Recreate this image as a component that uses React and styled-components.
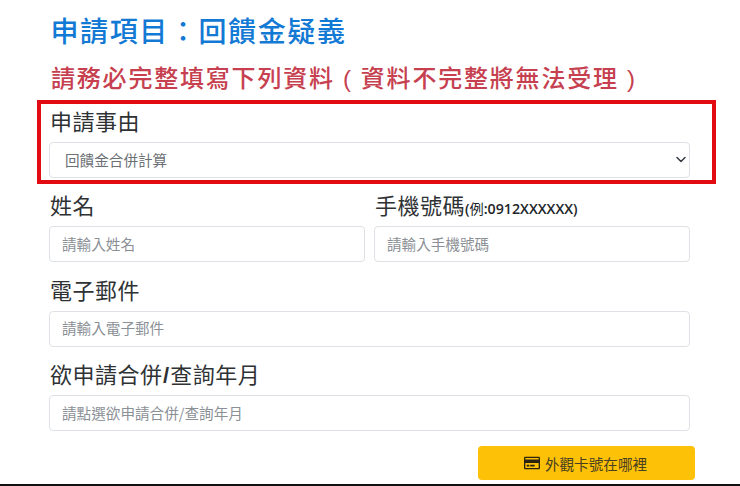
import React from 'react';
import styled, { createGlobalStyle } from 'styled-components';
import { FaRegCreditCard } from 'react-icons/fa';

const GlobalStyle = createGlobalStyle`
  html, body {
    margin: 0;
    padding: 0;
    background: #fff;
  }
  body {
    font-family: "Noto Sans CJK TC", "Liberation Sans", sans-serif;
  }
  * {
    box-sizing: border-box;
  }
`;

const Page = styled.div`
  width: 740px;
  height: 486px;
  overflow: hidden;
  display: flex;
  flex-direction: column;
  border-bottom: 2px solid #111;
`;

const Form = styled.form`
  padding: 11px 0 0 37px;
  display: flex;
  flex-direction: column;
`;

const Title = styled.h2`
  margin: 0 0 0 13.5px;
  font-size: 28px;
  line-height: 38px;
  font-weight: 500;
  letter-spacing: 1.6px;
  color: #1279d4;
`;

const Notice = styled.h3`
  height: 36px;
  margin: 10px 0 5px 14px;
  font-size: 24px;
  line-height: 36px;
  font-weight: 500;
  letter-spacing: 1.8px;
  color: #c6404f;
  white-space: nowrap;
`;

const Paren = styled.span`
  display: inline-block;
  width: 26px;
  line-height: 1;
  text-align: center;
  font-family: "Liberation Sans", sans-serif;
  font-weight: 400;
`;

const Highlight = styled.div`
  width: 679px;
  height: 84px;
  border: 4px solid #e30b12;
  padding: 2px 22px 0 8px;
`;

const Rows = styled.div`
  width: 641px;
  margin-left: 12px;
  display: flex;
  flex-direction: column;
`;

const Row = styled.div`
  display: flex;
  gap: 9px;
  margin-top: ${(p) => p.$top || 0}px;
`;

const Field = styled.div`
  flex: 1;
  min-width: 0;
`;

const Label = styled.label`
  display: block;
  height: 32px;
  margin-bottom: 4px;
  padding-left: 1px;
  font-size: 22px;
  line-height: 28px;
  letter-spacing: 0.5px;
  color: #2f3235;
  white-space: nowrap;
`;

const Hint = styled.span`
  font-family: "Open Sans", "Noto Sans CJK TC", sans-serif;
  font-size: 14.2px;
  font-weight: 600;
  letter-spacing: 0;
  color: #212529;
`;

const HintWord = styled.span`
  font-weight: 400;
`;

const Slash = styled.span`
  margin: 0 0.5px;
  font-family: "Liberation Sans", sans-serif;
  font-weight: 700;
`;

const Control = styled.input`
  display: block;
  width: 100%;
  height: 36px;
  padding: 0 12px 2px;
  border: 1px solid #dee2e6;
  border-radius: 4px;
  background: #fff;
  font-family: inherit;
  font-size: 14.6px;
  color: #495057;
  outline: none;
  &::placeholder {
    color: #8b9096;
    opacity: 1;
  }
`;

const SelectBox = styled.select`
  display: block;
  width: 100%;
  height: 36px;
  padding: 0 12px 2px 15px;
  border: 1px solid #dee2e6;
  border-radius: 4px;
  background: #fff;
  font-family: inherit;
  font-size: 14.6px;
  color: #6c7075;
  outline: none;
  appearance: none;
`;

const SelectWrap = styled.div`
  position: relative;
`;

const Chevron = styled.svg`
  position: absolute;
  right: 1px;
  top: 9px;
  width: 16px;
  height: 16px;
  pointer-events: none;
`;

const Actions = styled.div`
  display: flex;
  justify-content: flex-end;
  margin-top: 15px;
`;

const CardButton = styled.button`
  width: 217px;
  height: 34px;
  margin-right: -5px;
  padding: 0 2px 0 0;
  display: flex;
  align-items: center;
  justify-content: center;
  gap: 5px;
  border: none;
  border-radius: 4px;
  background: #fdc107;
  color: #4a3f22;
  font-family: inherit;
  font-size: 14.6px;
  svg {
    width: 16px;
    height: 16px;
    color: #2b2410;
  }
`;

export default function App() {
  return (
    <Page>
      <GlobalStyle />
      <Form>
        <Title>申請項目：回饋金疑義</Title>
        <Notice>
          請務必完整填寫下列資料<Paren>(</Paren>資料不完整將無法受理<Paren>)</Paren>
        </Notice>
        <Highlight>
          <Label>申請事由</Label>
          <SelectWrap>
            <SelectBox defaultValue="回饋金合併計算">
              <option>回饋金合併計算</option>
            </SelectBox>
            <Chevron viewBox="0 0 16 16" fill="none" stroke="#343a40" strokeWidth="1.5" strokeLinecap="round" strokeLinejoin="round">
              <path d="m4 6.5 4 4 4-4" />
            </Chevron>
          </SelectWrap>
        </Highlight>
        <Rows>
          <Row $top={6}>
            <Field>
              <Label>姓名</Label>
              <Control placeholder="請輸入姓名" />
            </Field>
            <Field>
              <Label>手機號碼<Hint>(<HintWord>例</HintWord>:0912XXXXXX)</Hint></Label>
              <Control placeholder="請輸入手機號碼" />
            </Field>
          </Row>
          <Row $top={12.5}>
            <Field>
              <Label>電子郵件</Label>
              <Control placeholder="請輸入電子郵件" />
            </Field>
          </Row>
          <Row $top={12.5}>
            <Field>
              <Label>欲申請合併<Slash>/</Slash>查詢年月</Label>
              <Control placeholder="請點選欲申請合併/查詢年月" />
            </Field>
          </Row>
          <Actions>
            <CardButton type="button">
              <FaRegCreditCard />
              外觀卡號在哪裡
            </CardButton>
          </Actions>
        </Rows>
      </Form>
    </Page>
  );
}
